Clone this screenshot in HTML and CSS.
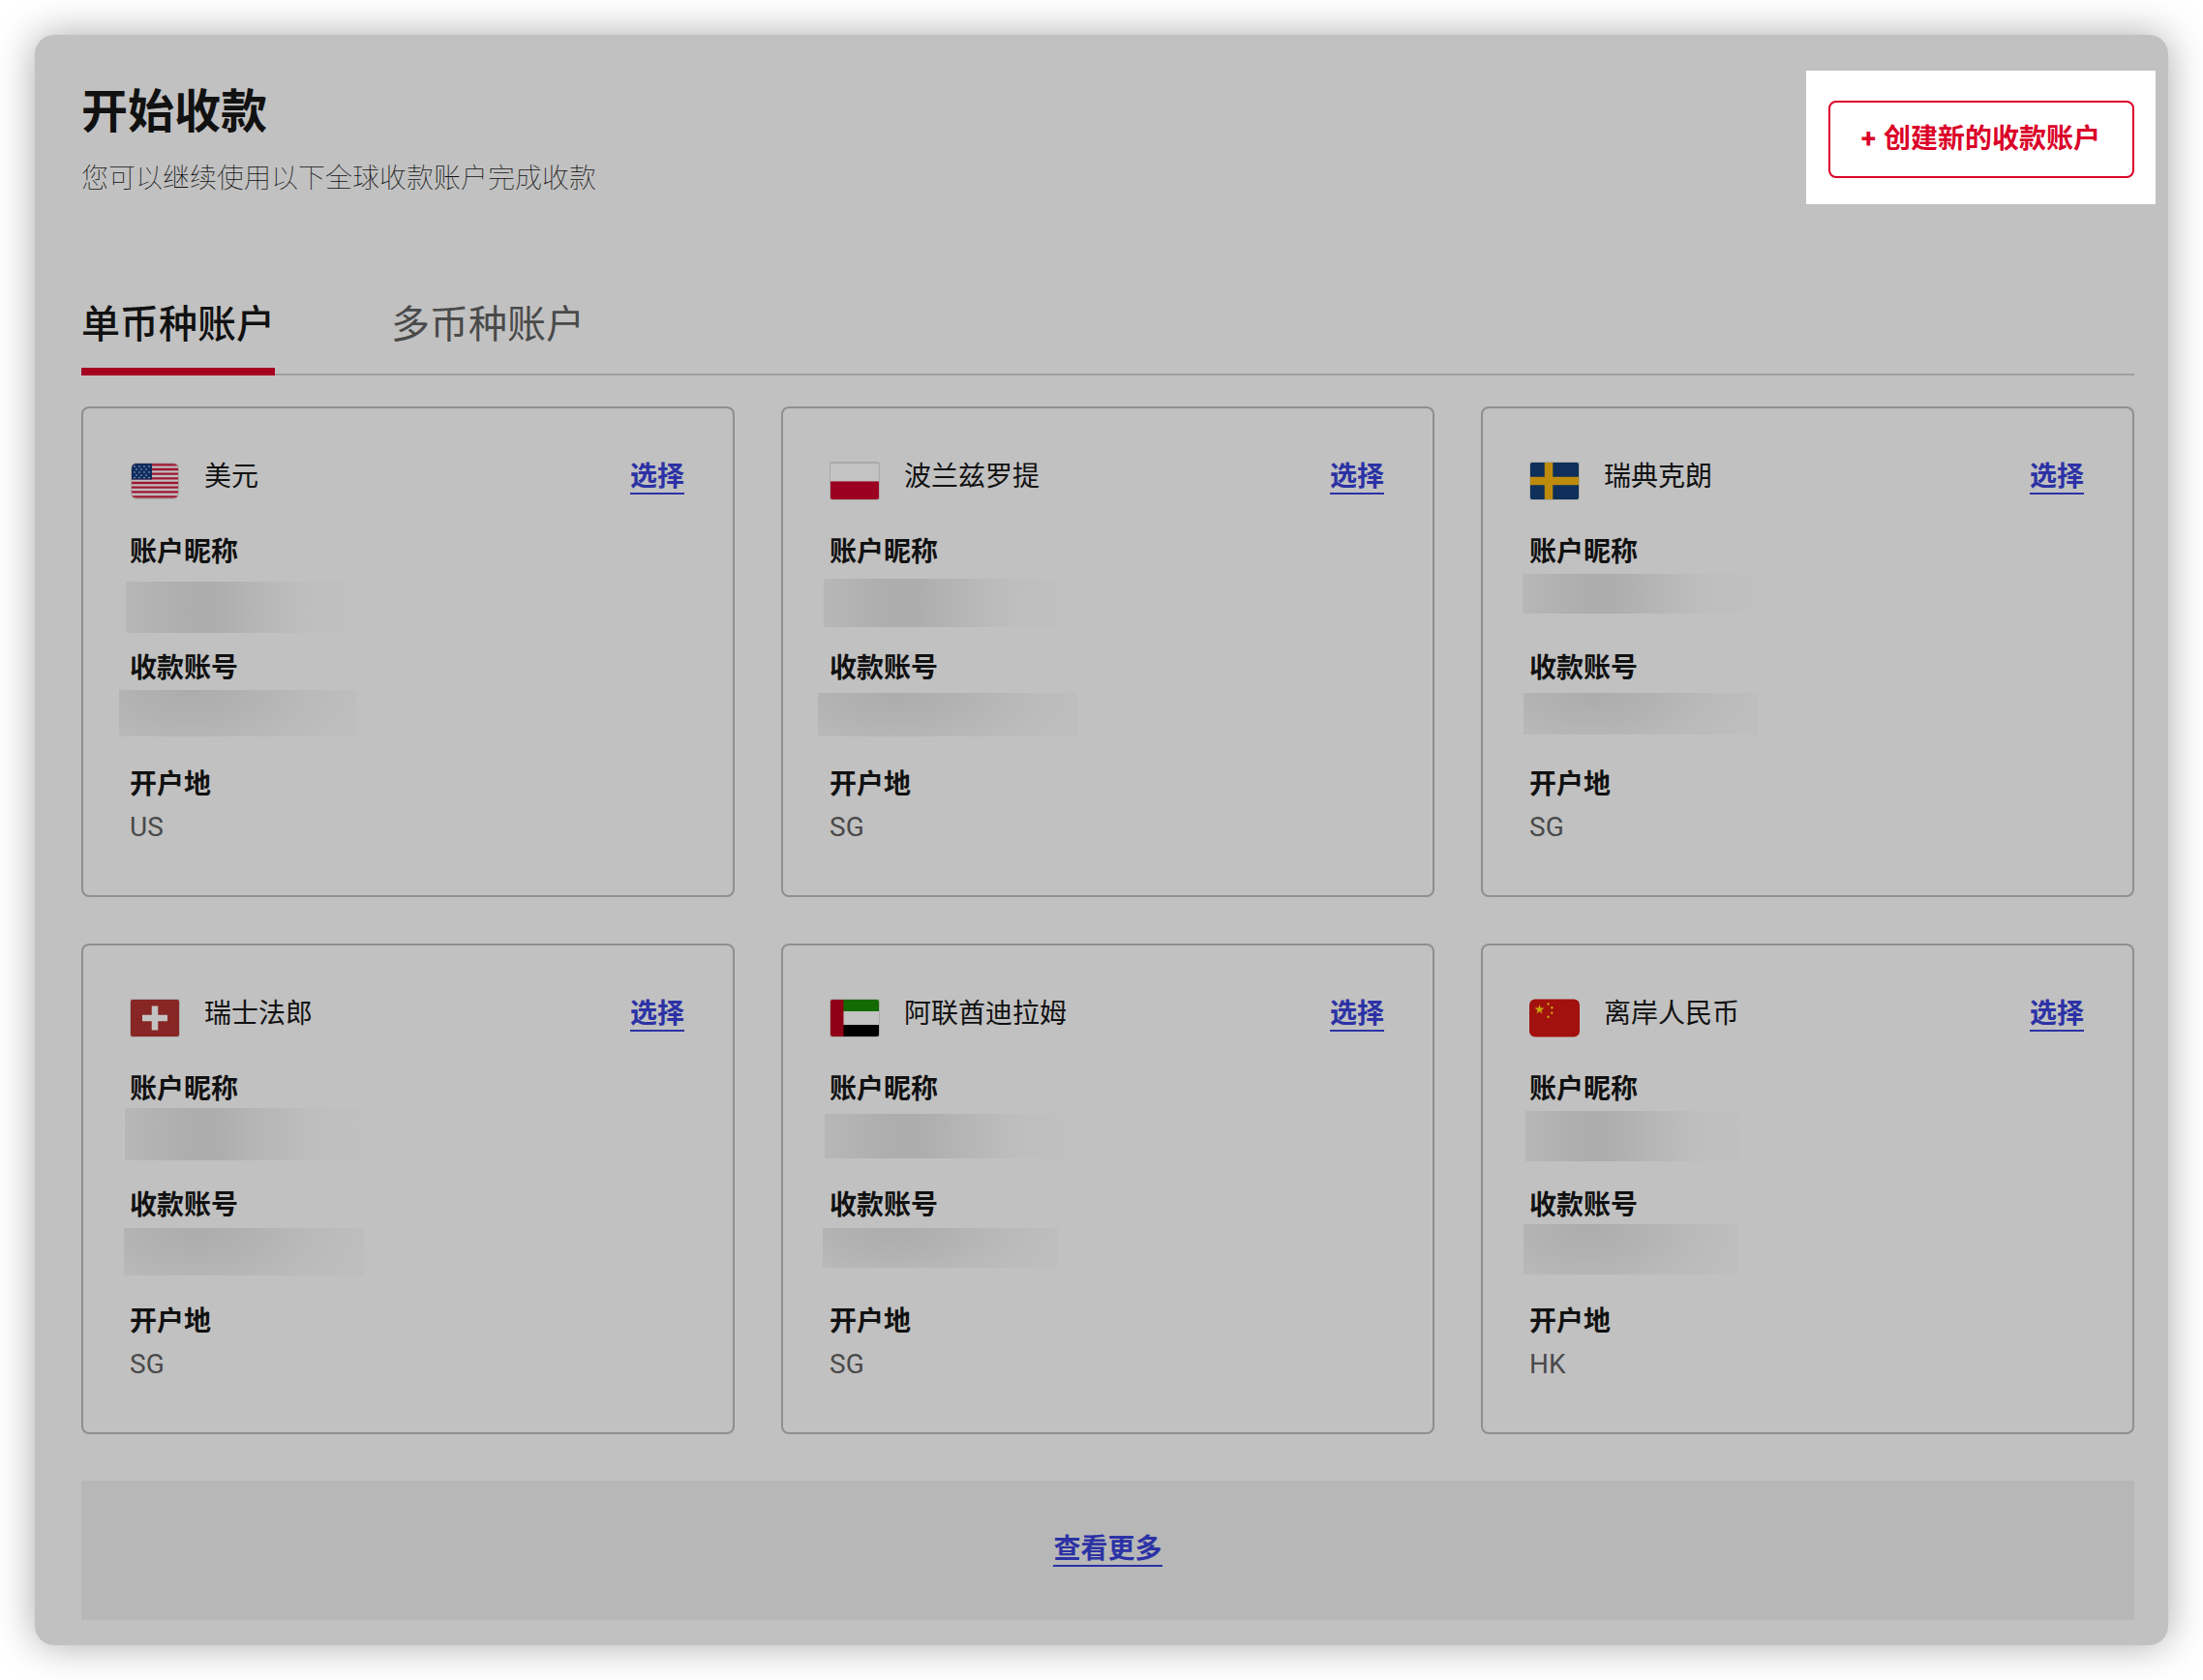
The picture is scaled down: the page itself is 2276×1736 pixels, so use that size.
FILE: index.html
```html
<!DOCTYPE html>
<html lang="zh-CN">
<head>
<meta charset="utf-8">
<meta name="viewport" content="width=device-width, initial-scale=1">
<title>开始收款</title>
<link rel="stylesheet" href="styles.css">
</head>
<body>
<main class="panel">
  <header class="header">
    <div class="heading">
      <h1 class="title">开始收款</h1>
      <p class="subtitle">您可以继续使用以下全球收款账户完成收款</p>
    </div>
    <div class="spotlight">
      <button type="button" class="create"><span>+</span> <span>创建新的收款账户</span></button>
    </div>
  </header>

  <div class="tabs" role="tablist">
    <button type="button" class="tab tab-active" role="tab" aria-selected="true">单币种账户</button>
    <button type="button" class="tab" role="tab" aria-selected="false">多币种账户</button>
  </div>

  <section class="cards">
    <article class="card card-usd">
      <div class="card-head">
        <svg class="flag" viewBox="0 0 52 40" aria-hidden="true">
          <rect x="1" y="1" width="50" height="38" rx="6" fill="#a9a5a5"/>
          <clipPath id="us"><rect x="2" y="2" width="48" height="36" rx="5"/></clipPath>
          <g clip-path="url(#us)">
            <rect x="2" y="2" width="48" height="36" fill="#c0bcbe"/>
            <path d="M2 3.400h48M2 8h48M2 12.700h48M2 17.400h48M2 22h48M2 26.700h48M2 31.400h48M2 36.400h48" stroke="#9d1730" stroke-width="2.300"/>
            <rect x="2" y="2" width="21" height="16.500" fill="#0e2d5f"/>
            <g fill="#a9b2c2">
              <circle cx="5" cy="5" r=".8"/><circle cx="10" cy="5" r=".8"/><circle cx="15" cy="5" r=".8"/><circle cx="20" cy="5" r=".8"/>
              <circle cx="7" cy="8" r=".8"/><circle cx="12" cy="8" r=".8"/><circle cx="17" cy="8" r=".8"/>
              <circle cx="5" cy="11" r=".8"/><circle cx="10" cy="11" r=".8"/><circle cx="15" cy="11" r=".8"/><circle cx="20" cy="11" r=".8"/>
              <circle cx="7" cy="14" r=".8"/><circle cx="12" cy="14" r=".8"/><circle cx="17" cy="14" r=".8"/>
              <circle cx="5" cy="16.500" r=".8"/><circle cx="10" cy="16.500" r=".8"/><circle cx="15" cy="16.500" r=".8"/><circle cx="20" cy="16.500" r=".8"/>
            </g>
          </g>
        </svg>
        <h2 class="currency">美元</h2>
        <a class="link" href="#usd">选择</a>
      </div>
      <dl class="fields">
        <div class="field"><dt>账户昵称</dt><dd><span class="mask mask-name"></span></dd></div>
        <div class="field"><dt>收款账号</dt><dd><span class="mask mask-number"></span></dd></div>
        <div class="field"><dt>开户地</dt><dd>US</dd></div>
      </dl>
    </article>

    <article class="card card-pln">
      <div class="card-head">
        <svg class="flag" viewBox="0 0 52 40" aria-hidden="true">
          <rect width="52" height="40" rx="3" fill="#a9a9a9"/>
          <path d="M1 4a2 2 0 0 1 2-2h46a2 2 0 0 1 2 2v16H1z" fill="#c3c3c3"/>
          <path d="M1 20.500h50V37a2 2 0 0 1-2 2H3a2 2 0 0 1-2-2z" fill="#9b0022"/>
        </svg>
        <h2 class="currency">波兰兹罗提</h2>
        <a class="link" href="#pln">选择</a>
      </div>
      <dl class="fields">
        <div class="field"><dt>账户昵称</dt><dd><span class="mask mask-name"></span></dd></div>
        <div class="field"><dt>收款账号</dt><dd><span class="mask mask-number"></span></dd></div>
        <div class="field"><dt>开户地</dt><dd>SG</dd></div>
      </dl>
    </article>

    <article class="card card-sek">
      <div class="card-head">
        <svg class="flag" viewBox="0 0 52 40" aria-hidden="true">
          <rect width="52" height="40" rx="3" fill="#a9a9a9"/>
          <rect x="1" y="1" width="50" height="38" rx="2" fill="#0d2f59"/>
          <path d="M1 20h50M20 1v38" stroke="#bd8a0b" stroke-width="8.500"/>
        </svg>
        <h2 class="currency">瑞典克朗</h2>
        <a class="link" href="#sek">选择</a>
      </div>
      <dl class="fields">
        <div class="field"><dt>账户昵称</dt><dd><span class="mask mask-name"></span></dd></div>
        <div class="field"><dt>收款账号</dt><dd><span class="mask mask-number"></span></dd></div>
        <div class="field"><dt>开户地</dt><dd>SG</dd></div>
      </dl>
    </article>

    <article class="card card-chf">
      <div class="card-head">
        <svg class="flag" viewBox="0 0 52 40" aria-hidden="true">
          <rect width="52" height="40" rx="3" fill="#a9a9a9"/>
          <rect x="1" y="1" width="50" height="38" rx="2" fill="#872624"/>
          <path d="M13 20h26M26 7.500v25" stroke="#c3c3c3" stroke-width="6.500"/>
        </svg>
        <h2 class="currency">瑞士法郎</h2>
        <a class="link" href="#chf">选择</a>
      </div>
      <dl class="fields">
        <div class="field"><dt>账户昵称</dt><dd><span class="mask mask-name"></span></dd></div>
        <div class="field"><dt>收款账号</dt><dd><span class="mask mask-number"></span></dd></div>
        <div class="field"><dt>开户地</dt><dd>SG</dd></div>
      </dl>
    </article>

    <article class="card card-aed">
      <div class="card-head">
        <svg class="flag" viewBox="0 0 52 40" aria-hidden="true">
          <rect width="52" height="40" rx="3" fill="#a9a9a9"/>
          <clipPath id="ae"><rect x="1" y="1" width="50" height="38" rx="2"/></clipPath>
          <g clip-path="url(#ae)">
            <rect x="1" y="1" width="50" height="38" fill="#c3c3c3"/>
            <rect x="14" y="1" width="37" height="12" fill="#136a00"/>
            <rect x="14" y="27" width="37" height="12" fill="#000"/>
            <rect x="1" y="1" width="13.500" height="38" fill="#8f0017"/>
          </g>
        </svg>
        <h2 class="currency">阿联酋迪拉姆</h2>
        <a class="link" href="#aed">选择</a>
      </div>
      <dl class="fields">
        <div class="field"><dt>账户昵称</dt><dd><span class="mask mask-name"></span></dd></div>
        <div class="field"><dt>收款账号</dt><dd><span class="mask mask-number"></span></dd></div>
        <div class="field"><dt>开户地</dt><dd>SG</dd></div>
      </dl>
    </article>

    <article class="card card-cnh">
      <div class="card-head">
        <svg class="flag" viewBox="0 0 52 40" aria-hidden="true">
          <rect y="0.500" width="52" height="39" rx="6" fill="#a3110e"/>
          <g fill="#c5a50c">
            <path d="M10.500 6l1.200 3.600h3.800l-3.100 2.300 1.200 3.700-3.100-2.300-3.100 2.300 1.200-3.700-3.100-2.300h3.800z"/>
            <circle cx="19.500" cy="5.500" r="1.200"/><circle cx="23.300" cy="9.200" r="1.200"/><circle cx="23.300" cy="14.800" r="1.200"/><circle cx="19.500" cy="18.800" r="1.200"/>
          </g>
        </svg>
        <h2 class="currency">离岸人民币</h2>
        <a class="link" href="#cnh">选择</a>
      </div>
      <dl class="fields">
        <div class="field"><dt>账户昵称</dt><dd><span class="mask mask-name"></span></dd></div>
        <div class="field"><dt>收款账号</dt><dd><span class="mask mask-number"></span></dd></div>
        <div class="field"><dt>开户地</dt><dd>HK</dd></div>
      </dl>
    </article>
  </section>

  <div class="more"><a class="link" href="#more">查看更多</a></div>
</main>
</body>
</html>
```
FILE: styles.css
```css
* {
  box-sizing: border-box;
}

body {
  margin: 0;
  padding: 36px;
  background: #fff;
  color: #111;
  font-family: Roboto, "Noto Sans CJK SC", sans-serif;
  font-size: 28px;
  line-height: 44px;
}

h1, h2, p, dl, dd {
  margin: 0;
}

button {
  font: inherit;
  background: none;
  cursor: pointer;
}

.panel {
  padding: 37px 35px 26px 48px;
  border-radius: 20px;
  background: #c1c1c1;
  box-shadow: 0 0 40px rgba(0, 0, 0, 0.34);
}

.header {
  display: flex;
  justify-content: space-between;
  align-items: flex-start;
}

.heading {
  padding-top: 7px;
}

.title {
  font-size: 48px;
  font-weight: 700;
  line-height: 72px;
}

.subtitle {
  margin-top: 11px;
  font-weight: 100;
}

/* White halo that singles out the create button on the dimmed page */
.spotlight {
  margin-right: -22px;
  padding: 31px 22px 27px 23px;
  background: #fff;
}

.create {
  display: flex;
  gap: 8px;
  align-items: center;
  height: 80px;
  padding: 0 33px 0 32px;
  border: 2px solid #db0028;
  border-radius: 8px;
  color: #db0028;
  font-weight: 700;
  box-shadow: 0 4px 0 #fcfcfc;
}

.tabs {
  display: flex;
  gap: 120px;
  margin-top: 93px;
  box-shadow: inset 0 -2px #a0a0a0;
}

.tab {
  padding: 2px 0 14px;
  border: 0;
  border-bottom: 8px solid transparent;
  color: #4a4a4a;
  font-size: 40px;
  line-height: 60px;
}

.tab-active {
  border-color: #a60021;
  color: #111;
  font-weight: 500;
}

.cards {
  display: grid;
  grid-template-columns: repeat(3, 1fr);
  gap: 48px;
  margin-top: 32px;
}

.card {
  padding: 49px 50px 48px 48px;
  border: 2px solid #8f8f8f;
  border-radius: 8px;
}

.card-head {
  display: flex;
  align-items: flex-start;
  margin-bottom: 34px;
}

.flag {
  flex: none;
  width: 52px;
  height: 40px;
  margin: 6px 25px -2px 0;
}

.currency {
  flex: 1;
  font-size: 28px;
  font-weight: 400;
}

.link {
  height: 40px;
  border-bottom: 2px solid #2c32a5;
  color: #2c32a5;
  font-weight: 700;
  text-decoration: none;
}

.fields {
  display: grid;
  gap: 32px;
}

.field dt {
  font-weight: 700;
}

.field dd {
  position: relative;
  height: 44px;
  color: #4a4a4a;
}

/* Blurred patches laid over the private values */
.mask {
  position: absolute;
}

.mask-name {
  background: linear-gradient(90deg, #b7b7b7, #aeaeae 25%, #adadad 38%, #b6b6b6 58%, #bebebe 78%, #c0c0c0);
}

.mask-number {
  background: radial-gradient(ellipse 72% 190% at 30% 0, #acacac, #b2b2b2 35%, #bababa 70%, #bebebe);
}

.card-usd .mask-name { left: -4px; top: 8px; width: 232px; height: 53px; }
.card-usd .mask-number { left: -11px; top: 0; width: 245px; height: 48px; }
.card-pln .mask-name { left: -6px; top: 5px; width: 249px; height: 50px; }
.card-pln .mask-number { left: -12px; top: 3px; width: 268px; height: 45px; }
.card-sek .mask-name { left: -7px; top: 0; width: 239px; height: 41px; }
.card-sek .mask-number { left: -6px; top: 3px; width: 242px; height: 43px; }
.card-chf .mask-name { left: -5px; top: -3px; width: 245px; height: 54px; }
.card-chf .mask-number { left: -6px; top: 1px; width: 248px; height: 49px; }
.card-aed .mask-name { left: -5px; top: 3px; width: 255px; height: 46px; }
.card-aed .mask-number { left: -7px; top: 1px; width: 243px; height: 41px; }
.card-cnh .mask-name { left: -4px; top: 0; width: 222px; height: 52px; }
.card-cnh .mask-number { left: -6px; top: -3px; width: 222px; height: 52px; }

.more {
  display: flex;
  justify-content: center;
  align-items: flex-start;
  height: 144px;
  margin-top: 48px;
  padding-top: 49px;
  background: #b7b7b7;
}
```
